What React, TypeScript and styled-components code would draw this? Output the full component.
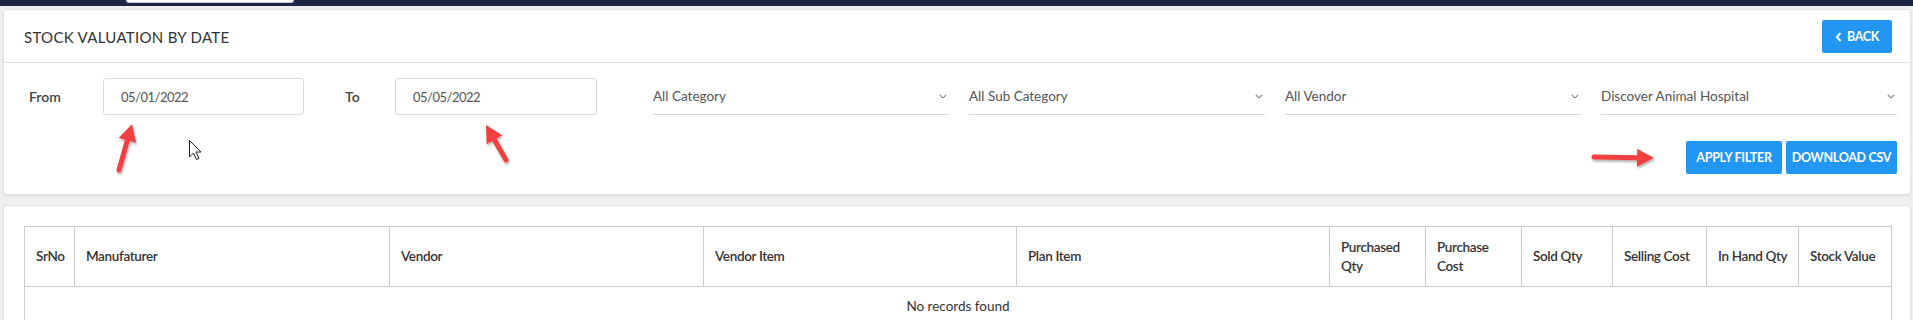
import styled, { createGlobalStyle } from "styled-components";

const GlobalStyle = createGlobalStyle`
  body {
    margin: 0;
    background: #f0f0f0;
    font-family: Lato, "Liberation Sans", sans-serif;
    color: #333;
  }
`;

const columns = [
  { label: "SrNo", width: 50 },
  { label: "Manufaturer", width: 315 },
  { label: "Vendor", width: 314 },
  { label: "Vendor Item", width: 313 },
  { label: "Plan Item", width: 313 },
  { label: "Purchased Qty", width: 96 },
  { label: "Purchase Cost", width: 96 },
  { label: "Sold Qty", width: 91 },
  { label: "Selling Cost", width: 94 },
  { label: "In Hand Qty", width: 92 },
  { label: "Stock Value", width: 93 },
];

const selects = ["All Category", "All Sub Category", "All Vendor", "Discover Animal Hospital"];

// annotation arrows drawn over the screenshot: [tailX, tailY, tipX, tipY]
const arrows: [number, number, number, number][] = [
  [119, 170, 132, 124],
  [506, 160, 486, 125],
  [1594, 157, 1654, 158],
];

const Chevron = ({ size = 8, color = "#777" }: { size?: number; color?: string }) => (
  <svg width={size} height={size * 0.6} viewBox="0 0 10 6">
    <polyline points="1,1 5,5 9,1" fill="none" stroke={color} strokeWidth="1.3" />
  </svg>
);

const Overlay = () => (
  <OverlaySvg width="1913" height="320">
    <defs>
      <filter id="shadow" x="-20%" y="-20%" width="140%" height="140%">
        <feDropShadow dx="1" dy="2" stdDeviation="1.2" floodColor="#000" floodOpacity="0.3" />
      </filter>
    </defs>
    {arrows.map(([x1, y1, x2, y2], i) => {
      const len = Math.hypot(x2 - x1, y2 - y1);
      const dx = (x2 - x1) / len;
      const dy = (y2 - y1) / len;
      const bx = x2 - dx * 17;
      const by = y2 - dy * 17;
      const px = -dy * 9;
      const py = dx * 9;
      return (
        <g key={i} filter="url(#shadow)">
          <line x1={x1} y1={y1} x2={bx + dx * 2} y2={by + dy * 2} stroke="#f24141" strokeWidth="5" strokeLinecap="round" />
          <polygon points={`${x2},${y2} ${bx + px},${by + py} ${bx - px},${by - py}`} fill="#f24141" />
        </g>
      );
    })}
    <path
      d="M189.5 140.5 L189.5 157 L193.5 153 L196.5 159.5 L199 158.5 L196 152 L201 152 Z"
      fill="#fff"
      stroke="#222"
      strokeWidth="1"
      strokeLinejoin="round"
    />
  </OverlaySvg>
);

export default function App() {
  return (
    <Screen>
      <GlobalStyle />
      <TopBar>
        <SearchStub />
      </TopBar>
      <Page>
        <Card>
          <CardHeader>
            <Title>STOCK VALUATION BY DATE</Title>
            <BlueButton $w={70} $h={33}>
              <svg width="7" height="10" viewBox="0 0 7 10">
                <polyline points="5.5,1 1.8,5 5.5,9" fill="none" stroke="#fff" strokeWidth="2" />
              </svg>
              BACK
            </BlueButton>
          </CardHeader>
          <FilterBody>
            <FilterRow>
              <Label $w={74}>From</Label>
              <DateInput $w={201}>05/01/2022</DateInput>
              <Label $w={50} style={{ marginLeft: 41 }}>To</Label>
              <DateInput $w={202}>05/05/2022</DateInput>
              <Selects>
                {selects.map((s) => (
                  <Select key={s}>
                    <span>{s}</span>
                    <Chevron />
                  </Select>
                ))}
              </Selects>
            </FilterRow>
            <ActionRow>
              <BlueButton $w={96} $h={33}>APPLY FILTER</BlueButton>
              <BlueButton $w={111} $h={33}>DOWNLOAD CSV</BlueButton>
            </ActionRow>
          </FilterBody>
        </Card>
        <TableCard>
          <Table>
            <colgroup>
              {columns.map((c) => (
                <col key={c.label} style={{ width: c.width }} />
              ))}
            </colgroup>
            <thead>
              <tr>
                {columns.map((c) => (
                  <Th key={c.label}>{c.label}</Th>
                ))}
              </tr>
            </thead>
            <tbody>
              <tr>
                <Empty colSpan={columns.length}>No records found</Empty>
              </tr>
            </tbody>
          </Table>
        </TableCard>
      </Page>
      <Overlay />
    </Screen>
  );
}

const Screen = styled.div`
  position: relative;
  width: 1913px;
  height: 320px;
  overflow: hidden;
`;

const OverlaySvg = styled.svg`
  position: absolute;
  left: 0;
  top: 0;
  pointer-events: none;
`;

const TopBar = styled.div`
  height: 6px;
  background: #1d2545;
  padding-left: 126px;
`;

const SearchStub = styled.div`
  width: 166px;
  height: 2px;
  background: #fff;
  border: 1px solid #c9ccd6;
  border-top: none;
  border-radius: 0 0 3px 3px;
`;

const Page = styled.div`
  padding: 3px 2px 0 3px;
`;

const Card = styled.div`
  background: #fff;
  border: 1px solid #e2e2e2;
  border-radius: 3px;
  box-shadow: 0 1px 2px rgba(0, 0, 0, 0.08);
`;

const CardHeader = styled.div`
  display: flex;
  align-items: center;
  justify-content: space-between;
  padding: 10px 18px 9px 20px;
  border-bottom: 1px solid #e0e0e0;
`;

const Title = styled.div`
  font-size: 15px;
  letter-spacing: 0.3px;
  color: #333;
  font-weight: 400;
`;

const BlueButton = styled.div<{ $w: number; $h: number }>`
  display: flex;
  align-items: center;
  justify-content: center;
  gap: 5px;
  width: ${(p) => p.$w}px;
  height: ${(p) => p.$h}px;
  background: #2196f3;
  color: #fff;
  border-radius: 2px;
  font-size: 12.5px;
  font-weight: 700;
  letter-spacing: -0.3px;
`;

const FilterBody = styled.div`
  padding: 15px 13px 20px 25px;
`;

const FilterRow = styled.div`
  display: flex;
  align-items: center;
  height: 37px;
`;

const Label = styled.div<{ $w: number }>`
  width: ${(p) => p.$w}px;
  font-size: 14px;
  font-weight: 600;
  color: #444;
`;

const DateInput = styled.div<{ $w: number }>`
  box-sizing: border-box;
  width: ${(p) => p.$w}px;
  height: 37px;
  display: flex;
  align-items: center;
  padding-left: 17px;
  border: 1px solid #dcdcdc;
  border-radius: 3px;
  font-size: 13px;
  letter-spacing: -0.5px;
  color: #555;
`;

const Selects = styled.div`
  display: grid;
  grid-template-columns: repeat(4, 296px);
  column-gap: 20px;
  margin-left: 56px;
`;

const Select = styled.div`
  box-sizing: border-box;
  height: 37px;
  display: flex;
  align-items: center;
  justify-content: space-between;
  padding-right: 2px;
  border-bottom: 1px solid #d8d8d8;
  font-size: 13.5px;
  color: #555;
`;

const ActionRow = styled.div`
  display: flex;
  justify-content: flex-end;
  gap: 4px;
  margin-top: 26px;
`;

const TableCard = styled(Card)`
  margin-top: 10px;
  padding: 20px 18px 40px 20px;
`;

const Table = styled.table`
  width: 1867px;
  border-collapse: collapse;
  table-layout: fixed;
`;

const Th = styled.th`
  height: 59px;
  padding: 0 10px 0 11px;
  border: 1px solid #cdc9cd;
  text-align: left;
  vertical-align: middle;
  font-size: 13.5px;
  font-weight: 600;
  letter-spacing: -0.35px;
  line-height: 19px;
  color: #333;
`;

const Empty = styled.td`
  height: 36px;
  border: 1px solid #cdc9cd;
  border-top: none;
  text-align: center;
  font-size: 13.5px;
  color: #333;
`;
